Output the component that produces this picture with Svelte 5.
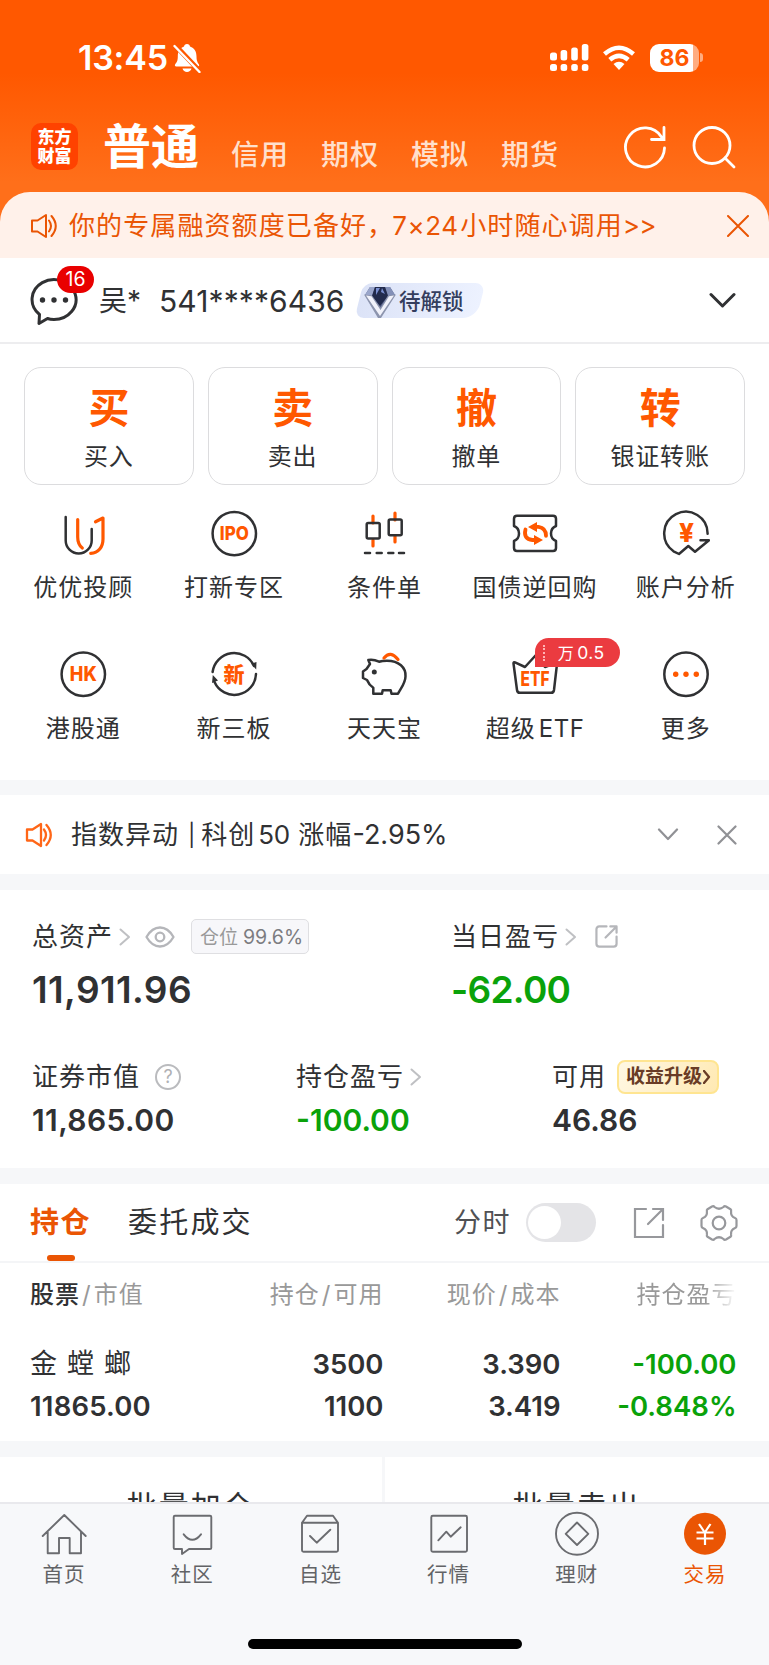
<script lang="ts">
  const accounts = ['信用', '期权', '模拟', '期货'];

  const actions = [
    { mark: '买', label: '买入' },
    { mark: '卖', label: '卖出' },
    { mark: '撤', label: '撤单' },
    { mark: '转', label: '银证转账' }
  ];

  const tools = [
    { icon: 'advisor', label: '优优投顾' },
    { icon: 'ipo', label: '打新专区' },
    { icon: 'candles', label: '条件单' },
    { icon: 'bond', label: '国债逆回购' },
    { icon: 'analysis', label: '账户分析' },
    { icon: 'hk', label: '港股通' },
    { icon: 'neeq', label: '新三板' },
    { icon: 'pig', label: '天天宝' },
    { icon: 'etf', label: '超级', latin: 'ETF', badge: true },
    { icon: 'more', label: '更多' }
  ];

  const tabs = [
    { icon: 'home', label: '首页' },
    { icon: 'community', label: '社区' },
    { icon: 'watch', label: '自选' },
    { icon: 'market', label: '行情' },
    { icon: 'wealth', label: '理财' },
    { icon: 'trade', label: '交易' }
  ];

  let active = $state('trade');
  let timeline = $state(false);
</script>

{#snippet speaker()}
  <svg class="speaker" width="28" height="28" viewBox="0 0 28 28">
    <path d="M2 8.5h5.5L16 3v22l-8.500-5.500H2z" />
    <path d="M19 8.500q4 5.500 0 11M21.500 4q8.500 10 0 20" />
  </svg>
{/snippet}

{#snippet arrow()}
  <svg class="arrow" width="12" height="18" viewBox="0 0 12 18"><path d="M1.500 1.500 10 9l-8.500 7.500" /></svg>
{/snippet}

{#snippet toolIcon(name: string)}
  <svg class="tool-icon" width="48" height="48" viewBox="0 0 48 48">
    {#if name === 'advisor'}
      <path d="M6.700 8v23.500a13 13 0 0 0 26 0V20" />
      <path class="hot" d="M18.700 10.500V28q0 7.500 4.600 11M31.700 44.300C39.500 44 44 38 44 30V9l-7.500 3.800" />
    {:else if name === 'ipo'}
      <circle cx="24.300" cy="24.600" r="21.700" />
      <text x="24.300" y="31.400" font-size="19" textLength="29" lengthAdjust="spacingAndGlyphs">IPO</text>
    {:else if name === 'candles'}
      <path class="hot" d="M13 7v7M13 31v6M35 4v7M35 27v6" />
      <rect x="6.700" y="14" width="13" height="15.600" rx="1.500" />
      <rect x="28.700" y="10.600" width="13" height="15.600" rx="1.500" />
      <path d="M5 44h5M16.700 44h5M28.300 44h5M39 44h5" />
    {:else if name === 'bond'}
      <path d="M6 6.800h36q3 0 3 3V17q-5 2-5 7.500t5 7.500v7q0 3-3 3H6q-3 0-3-3v-7q5-2 5-7.500T3 17V9.800q0-3 3-3z" />
      <path class="hot arrows" d="M24 17.800h3.500q7.500 1 7.500 9M14.500 20.500q-2.500 9.500 7 10.500h4" />
      <path class="hot-fill" d="M17 18l9-5v10zM32 31l-9-5v10z" />
    {:else if name === 'analysis'}
      <path d="M45.600 24.700A21.700 21.700 0 1 0 11.500 42.300L17 45l9.300-8 6.700 5.700 14-11.400h-8.500" />
      <text x="24.500" y="32.500" font-size="26">¥</text>
    {:else if name === 'hk'}
      <circle cx="24.300" cy="24.200" r="21.700" />
      <text x="24.300" y="31.300" font-size="19.500" textLength="27" lengthAdjust="spacingAndGlyphs">HK</text>
    {:else if name === 'neeq'}
      <path d="M2.600 22A21.700 21.700 0 0 1 44 16M46 24A21.700 21.700 0 0 1 4.500 32" />
      <path class="dark-fill" d="M41 13.500l5.500-1.500-.3 7.500zM2 33l.8-8 5.200 5.500z" />
      <text x="24" y="31.500" font-size="21">新</text>
    {:else if name === 'pig'}
      <path d="M8.300 10q5-1 10.700 1.700 3-1 8-1c12 0 19 7 18.500 15.500C45.500 33 41 38 38 43.700h-6.500l-.8-3.400h-8L22 43.700h-8.700v-6Q9 35 7 30l-4-2v-6.500L6.500 19 10 14z" />
      <circle class="dark-fill" cx="14.300" cy="22" r="2.500" />
      <path class="hot" d="M24 8q6.500-8 14 1.500" />
    {:else if name === 'etf'}
      <path d="M2.500 13.500 6 40q.4 2.800 3 2.800h31q2.600 0 3-2.800L46 14q.2-1.600-1.500-1L34 17 24.500 5.500 14 17 4 12.400q-1.600-.6-1.500 1.100z" />
      <text x="24" y="36" font-size="19.500" textLength="29" lengthAdjust="spacingAndGlyphs">ETF</text>
    {:else}
      <circle cx="24" cy="24.200" r="21.700" />
      <circle class="hot-fill" cx="13.700" cy="24.200" r="2.700" />
      <circle class="hot-fill" cx="24" cy="24.200" r="2.700" />
      <circle class="hot-fill" cx="34.300" cy="24.200" r="2.700" />
    {/if}
  </svg>
{/snippet}

{#snippet tabIcon(name: string)}
  <svg class="tab-icon" width="48" height="48" viewBox="0 0 48 48">
    {#if name === 'home'}
      <path d="M2.700 26 24.300 5l21.400 21M7.700 22v21.300H19V28h10.700v15.300H41V22" />
    {:else if name === 'community'}
      <path d="M7 5.700h35q1.300 0 1.300 1.300v30.700q0 1.300-1.300 1.300H21l-7 5v-5H7q-1.300 0-1.300-1.300V7q0-1.300 1.300-1.300zM15.700 24.300q8.600 11 17.300 0" />
    {:else if name === 'watch'}
      <path d="M6 12.700 11 5.700h26l5 7v27.500q0 1.500-1.500 1.500h-33Q6 41.700 6 40.200V12.700H42M14 26l6.700 6.700 13.600-13" />
    {:else if name === 'market'}
      <rect x="6.300" y="5.700" width="35.700" height="36" rx="1.500" />
      <path d="M13.300 30.300l8-8.600 4.400 5 10-9.400" />
    {:else if name === 'wealth'}
      <circle cx="24" cy="23.700" r="21" />
      <path d="M24 12.500 35.300 23.800 24 35 12.700 23.800z" />
    {:else}
      <circle class="trade-disc" cx="24" cy="23.700" r="21" />
      <path class="yen" d="M18 14l5.800 8.500L29.500 14M15.500 22.500h17M15.500 28.500h17M24 22.500V35" />
    {/if}
  </svg>
{/snippet}

<div class="app">
  <header>
    <div class="status">
      <span class="time">13:45</span>
      <svg class="bell" width="30" height="30" viewBox="0 0 30 30">
        <path d="M15 1c1.800 0 2.800 1 3 2.500 4.500 1.500 6.500 5 6.500 10 0 5 1.500 6.500 2.500 8q.8 2-1 2H4.200q-2-.3-1-2.200c1.500-2 2.600-3.300 2.600-7.800 0-5 2-8.500 6.200-10 .3-1.500 1.200-2.500 3-2.500zM10.500 25.500h9c-1 4.500-8 4.500-9 0z" />
        <path class="cut" d="M2 1 28 28.500" />
        <path class="slash" d="M2.500 3 27.500 29" />
      </svg>
      <svg class="signal" width="39" height="28" viewBox="0 0 39 28">
        <rect x="0" y="8.500" width="7" height="8" rx="2.500" /><rect x="10.600" y="6" width="6.600" height="10.500" rx="2.500" />
        <rect x="21.200" y="3.500" width="6.600" height="13" rx="2.500" /><rect x="31.800" y="0" width="6.600" height="16.500" rx="2.500" />
        <rect x="0" y="20" width="7" height="7" rx="2.500" /><rect x="10.600" y="20" width="6.600" height="7" rx="2.500" />
        <rect x="21.200" y="20" width="6.600" height="7" rx="2.500" /><rect x="31.800" y="20" width="6.600" height="7" rx="2.500" />
      </svg>
      <svg class="wifi" width="34" height="26" viewBox="0 0 34 26">
        <path d="M2.500 9q14.500-12.500 29 0M7.800 14.800q9.200-8 18.400 0" />
        <path class="wifi-dot" d="M11.500 19q5.500-4.500 11 0L17 25z" />
      </svg>
      <div class="battery"><span>86</span></div>
      <i class="nub"></i>
    </div>

    <nav class="top-nav">
      <div class="logo"><span>东方</span><span>财富</span></div>
      <strong>普通</strong>
      {#each accounts as account}
        <span class="account">{account}</span>
      {/each}
      <svg class="refresh" width="44" height="44" viewBox="0 0 44 44">
        <path d="M41.500 23A19.500 19.500 0 1 1 38.500 12M41 2.500v12H28.500" />
      </svg>
      <svg class="search" width="44" height="44" viewBox="0 0 44 44">
        <circle cx="20" cy="20.500" r="18" /><path d="M33 33l9 9" />
      </svg>
    </nav>
  </header>

  <div class="notice-wrap">
    <div class="notice">
      {@render speaker()}
      <p>你的专属融资额度已备好，<span class="num">7×24</span>小时随心调用<span class="more">&gt;&gt;</span></p>
      <svg width="22" height="22" viewBox="0 0 22 22"><path d="M1 1l20 20M21 1 1 21" /></svg>
    </div>
  </div>

  <section class="user">
    <div class="message">
      <svg width="50" height="50" viewBox="0 0 50 50">
        <path d="M10.500 38.500A22 20 0 1 1 25 43.500q-4 0-6.500-1L10 47.500z" />
        <circle cx="13.500" cy="24" r="2.700" /><circle cx="25" cy="24" r="2.700" /><circle cx="36.500" cy="24" r="2.700" />
      </svg>
      <b>16</b>
    </div>
    <span class="name">吴*</span>
    <span class="number">541****6436</span>
    <div class="unlock">
      <svg width="32" height="34" viewBox="0 0 32 34">
        <path d="M6 2h20l5 8-15 22L1 10z" fill="#56608a" />
        <path d="M6 2 1 10l7 1 3-9z" fill="#9aa6cb" />
        <path d="M26 2l5 8-7 1-3-9z" fill="#8390b8" />
        <path d="M11 2h10l3 9-8 10-8-10z" fill="#222b4c" />
        <path d="M12 3h4l-4 7zM18 3l3 6-4-2z" fill="#7a8fd0" />
        <path d="M0 9.500l8 1 8.500 12L24 10.500l8-1L17 33h-3z" fill="#8d95ae" />
        <path d="M2 10.500l5.500.8 9 13.700L25 11.300l5-.8-14 20.500z" fill="#f1f2fa" />
      </svg>
      <span>待解锁</span>
    </div>
    <svg class="down" width="27" height="17" viewBox="0 0 27 17"><path d="M2 2.500 13.500 14 25 2.500" /></svg>
  </section>

  <section class="actions">
    {#each actions as action}
      <button><strong>{action.mark}</strong><span>{action.label}</span></button>
    {/each}
  </section>

  <section class="tools">
    {#each tools as tool}
      <div class="tool">
        {@render toolIcon(tool.icon)}
        <span>{tool.label}{#if tool.latin}<em>{tool.latin}</em>{/if}</span>
        {#if tool.badge}
          <div class="rate"><i></i>万<b>0.5</b></div>
        {/if}
      </div>
    {/each}
  </section>

  <section class="news">
    {@render speaker()}
    <p>指数异动<span class="bar">|</span>科创<span class="fifty">50</span>涨幅<span class="change">-2.95%</span></p>
    <svg width="22" height="14" viewBox="0 0 22 14"><path d="M2 1.500l9 9.500 9-9.500" /></svg>
    <svg class="close" width="20" height="20" viewBox="0 0 20 20"><path d="M1.500 1.500l17 17M18.500 1.500l-17 17" /></svg>
  </section>

  <section class="assets">
    <div class="asset-main">
      <div>
        <div class="label">
          <span>总资产</span>{@render arrow()}
          <svg class="eye" width="30" height="22" viewBox="0 0 30 22">
            <path d="M1.500 11Q7 1.500 15 1.500T28.500 11Q23 20.500 15 20.500T1.500 11z" /><circle cx="15" cy="11" r="4.300" />
          </svg>
          <div class="position">仓位<span>99.6%</span></div>
        </div>
        <strong class="total">11,911.96</strong>
      </div>
      <div>
        <div class="label">
          <span>当日盈亏</span>{@render arrow()}
          <svg class="open" width="23" height="23" viewBox="0 0 24 24">
            <path d="M12 1.500H4.500q-3 0-3 3v15q0 3 3 3h15q3 0 3-3V12M11 13 22 2M16 1.500h6.500V8" />
          </svg>
        </div>
        <strong class="total today">-62.00</strong>
      </div>
    </div>
    <div class="asset-sub">
      <div>
        <div class="label"><span>证券市值</span><i class="help">?</i></div>
        <strong class="market">11,865.00</strong>
      </div>
      <div>
        <div class="label"><span>持仓盈亏</span>{@render arrow()}</div>
        <strong class="green">-100.00</strong>
      </div>
      <div>
        <div class="label"><span>可用</span>
          <div class="upgrade">收益升级<svg width="8" height="14" viewBox="0 0 8 14"><path d="M1 1l5 6-5 6" /></svg></div>
        </div>
        <strong>46.86</strong>
      </div>
    </div>
  </section>

  <section class="holdings">
    <div class="holding-tabs">
      <span class="on">持仓</span>
      <span class="orders">委托成交</span>
      <span class="time-label">分时</span>
      <button class="toggle" class:checked={timeline} aria-label="分时" onclick={() => (timeline = !timeline)}><i></i></button>
      <svg class="share" width="32" height="32" viewBox="0 0 32 32">
        <path d="M13 2H2v28h28V18M15 17 29.500 2.500M20 2h10v11" />
      </svg>
      <svg class="gear" width="38" height="38" viewBox="0 0 38 38">
        <path d="M12 2.500q1.500-.8 2.500.5 4.500 3.500 9 0 1-1.300 2.500-.5l4.500 2.700q1 .8.600 2.300-.6 4.700 4 6.500 1.400.5 1.400 2v6q0 1.500-1.400 2-4.600 1.800-4 6.500.4 1.500-.6 2.300L26 35.500q-1.500.8-2.500-.5-4.500-3.500-9 0-1 1.300-2.500.5l-4.500-2.700q-1-.8-.6-2.300.6-4.700-4-6.500-1.400-.5-1.400-2v-6q0-1.500 1.400-2 4.600-1.800 4-6.500-.4-1.500.6-2.300z" />
        <circle cx="19" cy="19" r="6.300" />
      </svg>
    </div>
    <div class="row head">
      <span><b>股票</b><i>/</i>市值</span>
      <span>持仓<i>/</i>可用</span>
      <span>现价<i>/</i>成本</span>
      <span class="fade">持仓盈亏</span>
    </div>
    <div class="row first">
      <span class="stock">金 螳 螂</span><span>3500</span><span>3.390</span><span class="green">-100.00</span>
    </div>
    <div class="row">
      <span class="value">11865.00</span><span>1100</span><span>3.419</span><span class="green">-0.848%</span>
    </div>
  </section>

  <section class="batch">
    <span>批量加仓</span>
    <span>批量卖出</span>
  </section>

  <footer>
    <nav>
      {#each tabs as tab}
        <button class="tab" class:active={active === tab.icon} onclick={() => (active = tab.icon)}>
          {@render tabIcon(tab.icon)}
          <span>{tab.label}</span>
        </button>
      {/each}
    </nav>
    <div class="indicator"></div>
  </footer>
</div>

<style>
  :global(body) {
    margin: 0;
    background: #fff;
  }
  .app {
    width: 769px;
    height: 1665px;
    display: flex;
    flex-direction: column;
    overflow: hidden;
    background: #fff;
    color: #303133;
    font-family: Inter, "Noto Sans CJK SC", sans-serif;
    white-space: nowrap;
  }
  .app * {
    box-sizing: border-box;
  }
  p {
    margin: 0;
  }
  i, em {
    font-style: normal;
  }
  button {
    border: 0;
    padding: 0;
    background: none;
    color: inherit;
    font-family: inherit;
  }
  svg {
    display: block;
    flex: none;
    fill: none;
    stroke-linecap: round;
    stroke-linejoin: round;
  }

  header {
    height: 192px;
    flex: none;
    background: linear-gradient(#ff5800 0, #ff5800 38%, #ff6f1a 95%);
    color: #fff;
  }
  .status {
    height: 115px;
    padding: 0 66px 0 78px;
    display: flex;
    align-items: center;
  }
  .time {
    width: 94px;
    font-size: 34px;
    font-weight: 600;
    letter-spacing: -0.2px;
  }
  .bell {
    fill: #fff;
  }
  .bell .cut {
    stroke: #ff5800;
    stroke-width: 5;
  }
  .bell .slash {
    stroke: #fff;
    stroke-width: 2.4;
  }
  .signal {
    margin-left: auto;
    fill: #fff;
  }
  .wifi {
    margin-left: 13px;
    stroke: #fff;
    stroke-width: 4.5;
    stroke-linecap: butt;
  }
  .wifi .wifi-dot {
    fill: #fff;
    stroke: none;
  }
  .battery {
    width: 49px;
    height: 28px;
    margin-left: 14px;
    border-radius: 9px;
    background: linear-gradient(90deg, #fff 43px, #ffac80 43px);
    color: #ff5800;
    font-size: 23px;
    font-weight: 700;
    line-height: 28px;
    text-align: center;
  }
  .nub {
    width: 3px;
    height: 9px;
    margin-left: 1px;
    border-radius: 0 4px 4px 0;
    background: #ffac80;
  }
  .top-nav {
    height: 77px;
    padding: 0 33px 14px 31px;
    display: flex;
    align-items: center;
  }
  .logo {
    width: 47px;
    height: 47px;
    border-radius: 10px;
    background: #ff4200;
    display: flex;
    flex-direction: column;
    align-items: center;
    justify-content: center;
    font-size: 17px;
    font-weight: 900;
    line-height: 19px;
  }
  .top-nav strong {
    width: 128px;
    margin-left: 25px;
    font-size: 48px;
    line-height: 50px;
    font-weight: 700;
  }
  .account {
    width: 90px;
    padding-top: 17px;
    font-size: 28px;
    line-height: 30px;
    letter-spacing: 1px;
    color: #ffe0cd;
    font-weight: 500;
  }
  .refresh, .search {
    margin-left: auto;
    stroke: #fff;
    stroke-width: 2.8;
    stroke-linejoin: miter;
  }
  .search {
    margin-left: 25px;
  }

  .notice-wrap {
    height: 66px;
    flex: none;
    background: #ff6f1a;
  }
  .notice {
    height: 66px;
    padding: 1px 20px 0 30px;
    display: flex;
    align-items: center;
    border-radius: 30px 30px 0 0;
    background: #fff1ea;
    color: #ea5504;
    font-size: 26px;
    letter-spacing: 1.1px;
    line-height: 30px;
  }
  .notice p {
    margin-left: 11px;
  }
  .notice .num {
    display: inline-block;
    width: 68px;
    margin-left: -2px;
    letter-spacing: 0.6px;
  }
  .notice .more {
    letter-spacing: -0.8px;
  }
  .notice svg {
    stroke: #ea5504;
    stroke-width: 2;
  }
  .notice > svg:last-child {
    margin-left: auto;
  }
  .speaker {
    stroke-width: 2.2;
  }

  .user {
    height: 86px;
    flex: none;
    padding: 1px 33px 0 29px;
    display: flex;
    align-items: center;
    border-bottom: 2px solid #ededef;
    font-size: 30px;
    line-height: 34px;
  }
  .message {
    position: relative;
    width: 70px;
  }
  .message svg {
    stroke: #303133;
    stroke-width: 3;
  }
  .message circle {
    fill: #303133;
    stroke: none;
  }
  .message b {
    position: absolute;
    left: 28px;
    top: -10px;
    width: 37px;
    height: 27px;
    border-radius: 14px;
    background: #e90000;
    color: #fff;
    font-size: 19.500px;
    font-weight: 400;
    line-height: 27px;
    text-align: center;
  }
  .name {
    width: 60px;
    font-size: 28px;
  }
  .number {
    width: 200px;
    letter-spacing: 0.1px;
  }
  .unlock {
    position: relative;
    width: 122px;
    height: 35px;
    display: flex;
    align-items: center;
    color: #343e5e;
    font-size: 21.5px;
    font-weight: 500;
  }
  .unlock::before {
    content: "";
    position: absolute;
    inset: 0;
    border-radius: 9px 10px 14px 9px;
    transform: skewX(-14deg);
    background: linear-gradient(90deg, #dce3f7, #edf2ff);
  }
  .unlock svg {
    position: relative;
    margin: 2px 3px 0 5px;
  }
  .unlock span {
    position: relative;
  }
  .down {
    margin-left: auto;
    stroke: #303133;
    stroke-width: 3;
  }

  .actions {
    flex: none;
    padding: 23px 24px 0;
    display: grid;
    grid-template-columns: repeat(4, 1fr);
    gap: 14px;
  }
  .actions button {
    height: 118px;
    border: 1.5px solid #dcdcde;
    border-radius: 17px;
    display: flex;
    flex-direction: column;
    align-items: center;
    padding-top: 18px;
  }
  .actions strong {
    color: #ff5800;
    font-size: 41px;
    line-height: 44px;
    font-weight: 700;
  }
  .actions span {
    margin-top: 12px;
    font-size: 24px;
    line-height: 30px;
    letter-spacing: 0.8px;
    color: #303133;
  }

  .tools {
    height: 295px;
    flex: none;
    padding: 24px 8px 0;
    display: grid;
    grid-template-columns: repeat(5, 1fr);
    grid-template-rows: 141px 141px;
  }
  .tool {
    position: relative;
    display: flex;
    flex-direction: column;
    align-items: center;
    font-size: 24px;
    line-height: 30px;
    letter-spacing: 1px;
  }
  .tool > span {
    margin-top: 16px;
  }
  .tool em {
    margin-left: 3px;
    letter-spacing: 0.6px;
  }
  .tool-icon {
    stroke: #303133;
    stroke-width: 2.5;
  }
  .tool-icon .hot {
    stroke: #ff5800;
    stroke-width: 3.2;
  }
  .tool-icon .arrows {
    stroke-width: 3.8;
  }
  .tool-icon .hot-fill {
    fill: #ff5800;
    stroke: none;
  }
  .tool-icon .dark-fill {
    fill: #303133;
    stroke: none;
  }
  .tool-icon text {
    fill: #ff5800;
    stroke: none;
    font-weight: 800;
    text-anchor: middle;
    letter-spacing: 0;
  }
  .rate {
    position: absolute;
    left: 75px;
    top: -12px;
    width: 85px;
    height: 29px;
    padding-left: 8px;
    display: flex;
    align-items: center;
    border-radius: 14px 15px 15px 0;
    background: #eb3b40;
    color: #fff;
    font-size: 16px;
    letter-spacing: 0.4px;
  }
  .rate i {
    height: 16px;
    margin-right: 13px;
    border-left: 2px dotted #ffb2b4;
  }
  .rate b {
    margin-left: 3px;
    font-size: 17.5px;
    font-weight: 400;
  }

  .news {
    height: 110px;
    flex: none;
    padding: 0 32px 0 25px;
    display: flex;
    align-items: center;
    border: solid #f6f7f9;
    border-width: 15px 0 16px;
    font-size: 26px;
    line-height: 32px;
    letter-spacing: 1px;
  }
  .news .speaker {
    stroke: #ff6617;
    stroke-width: 2.3;
  }
  .news p {
    margin-left: 18px;
    margin-right: auto;
  }
  .bar {
    margin: 0 5px 0 9px;
    font-size: 22px;
    vertical-align: 1px;
  }
  .fifty {
    display: inline-block;
    width: 40px;
    margin-left: 3px;
    letter-spacing: -0.5px;
  }
  .change {
    font-size: 27px;
    letter-spacing: 0;
  }
  .news svg:not(.speaker) {
    stroke: #909195;
    stroke-width: 2.2;
  }
  .news .close {
    margin-left: 38px;
  }

  .assets {
    height: 278px;
    flex: none;
    padding: 29px 0 0 32px;
  }
  .asset-main {
    height: 140px;
    display: grid;
    grid-template-columns: 419px 1fr;
  }
  .asset-sub {
    display: grid;
    grid-template-columns: 264px 256px 1fr;
  }
  .label {
    height: 35px;
    display: flex;
    align-items: center;
    font-size: 26px;
    line-height: 34px;
    letter-spacing: 1px;
  }
  .label .arrow {
    margin-left: 6px;
    stroke: #bfc0c3;
    stroke-width: 2;
  }
  .eye, .open {
    stroke: #b5b6ba;
    stroke-width: 2.3;
  }
  .eye {
    margin-left: 14px;
  }
  .open {
    margin-left: 18px;
  }
  .position {
    width: 118px;
    height: 35px;
    margin-left: 16px;
    padding-left: 8px;
    border: 1.5px solid #dfdfe2;
    border-radius: 5px;
    background: #f7f7fa;
    color: #999;
    font-size: 19px;
    letter-spacing: 0;
  }
  .position span {
    margin-left: 5px;
    font-size: 19.5px;
    color: #7c7c80;
  }
  .assets strong {
    display: block;
    margin-top: 8px;
    font-size: 30px;
    line-height: 36px;
    font-weight: 600;
  }
  .assets .market {
    letter-spacing: 0.4px;
  }
  .assets .total {
    margin-top: 14px;
    font-size: 37px;
    line-height: 44px;
    letter-spacing: 0.4px;
  }
  .assets .today, .green {
    color: #0aa20a;
  }
  .assets .today {
    letter-spacing: -0.7px;
  }
  .help {
    width: 26px;
    height: 26px;
    margin-left: 15px;
    border: 2px solid #babbbe;
    border-radius: 50%;
    color: #b0b1b4;
    font-size: 18px;
    line-height: 22px;
    letter-spacing: 0;
    text-align: center;
  }
  .upgrade {
    width: 102px;
    height: 34px;
    margin-left: 11px;
    padding-left: 7px;
    display: flex;
    align-items: center;
    gap: 1px;
    border: 2px solid #ffe591;
    border-radius: 8px;
    background: linear-gradient(120deg, #fff8e4, #ffe9b3);
    color: #693c26;
    font-size: 19px;
    font-weight: 700;
    letter-spacing: 0;
  }
  .upgrade svg {
    stroke: #693c26;
    stroke-width: 2.3;
  }

  .holdings {
    height: 289px;
    flex: none;
    border: solid #f6f7f9;
    border-width: 16px 0;
  }
  .holding-tabs {
    height: 79px;
    padding: 0 31px 0 30px;
    display: flex;
    align-items: center;
    border-bottom: 2px solid #f4f5f7;
    font-size: 29px;
    line-height: 42px;
  }
  .holding-tabs .on {
    position: relative;
    width: 98px;
    color: #ea5504;
    font-weight: 700;
    letter-spacing: 1.5px;
  }
  .on::after {
    content: "";
    position: absolute;
    left: 17px;
    bottom: -17px;
    width: 28px;
    height: 6px;
    border-radius: 3px;
    background: #ea5504;
  }
  .orders {
    letter-spacing: 2.2px;
  }
  .time-label {
    margin-left: auto;
    color: #505154;
    font-size: 27px;
    letter-spacing: 1.5px;
  }
  .toggle {
    width: 70px;
    height: 39px;
    margin: 0 37px 0 15px;
    padding: 2px;
    display: flex;
    align-items: center;
    border-radius: 20px;
    background: #e4e4e7;
  }
  .toggle.checked {
    justify-content: flex-end;
    background: #ea5504;
  }
  .toggle i {
    width: 33px;
    height: 33px;
    border-radius: 50%;
    background: #fff;
  }
  .share, .gear {
    stroke: #97989c;
    stroke-width: 2.2;
  }
  .share {
    stroke-linejoin: miter;
  }
  .gear {
    margin-left: 35px;
  }
  .row {
    height: 42px;
    padding-left: 30px;
    display: grid;
    grid-template-columns: 180px 173.5px 177px 176px;
    align-items: center;
    font-size: 27.5px;
    line-height: 42px;
    font-weight: 600;
  }
  .row > span:not(:first-child) {
    text-align: right;
  }
  .row.first {
    margin-top: 17px;
  }
  .row .stock {
    font-size: 27px;
    font-weight: 400;
    letter-spacing: 1.2px;
  }
  .row .value {
    letter-spacing: 0.2px;
  }
  .row.head {
    height: 63px;
    color: #999;
    font-size: 24px;
    font-weight: 400;
    letter-spacing: 1px;
  }
  .row.head b {
    color: #303133;
    font-weight: 500;
  }
  .row.head i {
    margin: 0 2px;
  }
  .row .fade {
    -webkit-mask-image: linear-gradient(90deg, #000 82%, transparent 100%);
    mask-image: linear-gradient(90deg, #000 82%, transparent 100%);
  }

  .batch {
    height: 45px;
    flex: none;
    display: grid;
    grid-template-columns: 1fr 1fr;
    overflow: hidden;
  }
  .batch span {
    padding-top: 27px;
    text-align: center;
    font-size: 30px;
    line-height: 44px;
    letter-spacing: 2px;
  }
  .batch span:first-child {
    border-right: 3px solid #f6f7f9;
  }

  footer {
    height: 163px;
    flex: none;
    border-top: 2px solid #e9e9ed;
    background: #f7f8fa;
  }
  footer nav {
    height: 135px;
    padding-top: 6px;
    display: grid;
    grid-template-columns: repeat(6, 1fr);
  }
  .tab {
    display: flex;
    flex-direction: column;
    align-items: center;
    color: #626366;
    font-size: 20.5px;
    line-height: 28px;
    letter-spacing: 1px;
  }
  .tab span {
    margin-top: 3px;
  }
  .tab.active {
    color: #ea5504;
  }
  .tab-icon {
    stroke: #6b6c70;
    stroke-width: 1.9;
  }
  .tab-icon .trade-disc {
    fill: #ea5504;
    stroke: none;
  }
  .tab-icon .yen {
    stroke: #fff;
    stroke-width: 2.2;
    stroke-linecap: butt;
  }
  .indicator {
    width: 274px;
    height: 10px;
    margin: 0 auto;
    border-radius: 5px;
    background: #000;
  }
</style>
